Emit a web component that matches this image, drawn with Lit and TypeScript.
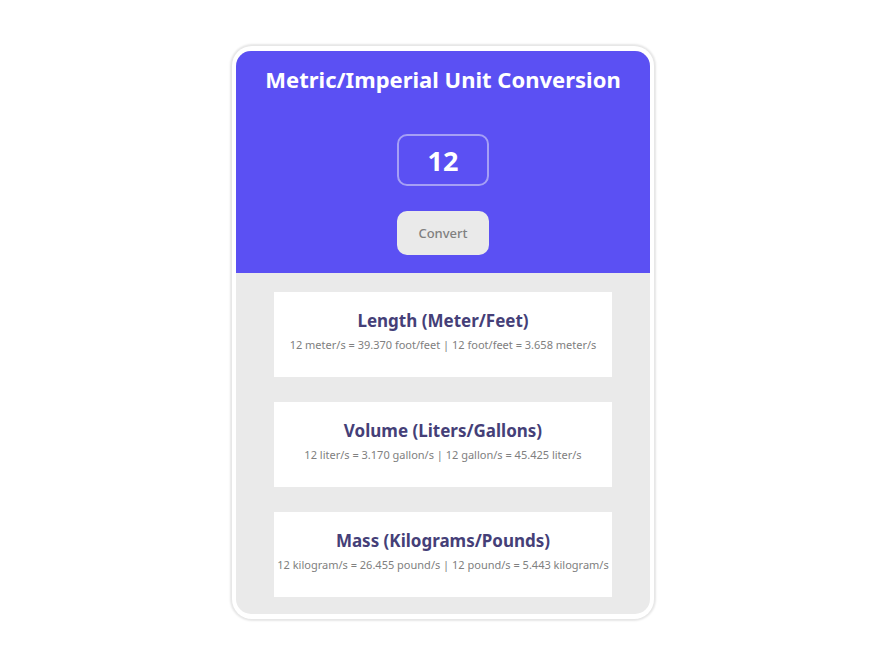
import { LitElement, html, css } from "lit";
import { customElement, state } from "lit/decorators.js";

interface Result {
  name: string;
  values: string;
}

@customElement("app-root")
export class AppRoot extends LitElement {
  static styles = css`
    :host {
      display: flex;
      justify-content: center;
      align-items: center;
      box-sizing: border-box;
      min-height: 100vh;
      padding: 1px 6px 0 0;
      background: #fff;
      font-family: "Noto Sans", "Open Sans", sans-serif;
    }
    * {
      box-sizing: border-box;
    }
    .card {
      width: 100%;
      max-width: 422px;
      padding: 5px 4px;
      border-radius: 20px;
      background: #fff;
      box-shadow: 0 0 2px 2px #e6e6e6;
    }
    .panel {
      border-radius: 15px;
      overflow: hidden;
      background: #eaeaea;
    }
    .top {
      display: flex;
      flex-direction: column;
      align-items: center;
      padding: 12px 0 18px;
      background: #5b50f3;
    }
    .title {
      margin: 0 0 39px;
      font-size: 22px;
      line-height: 32px;
      font-weight: 700;
      color: #fff;
      white-space: nowrap;
    }
    .amount {
      width: 92px;
      height: 52px;
      margin: 0 0 25px;
      padding: 0;
      border: 2px solid #a59ff5;
      border-radius: 10px;
      background: transparent;
      color: #fff;
      font-family: inherit;
      font-size: 27px;
      font-weight: 700;
      text-align: center;
      outline: none;
    }
    .convert {
      width: 92px;
      height: 44px;
      padding: 0;
      border: 0;
      border-radius: 10px;
      background: #eaeaea;
      color: #808080;
      font-family: inherit;
      font-size: 13px;
      font-weight: 500;
    }
    .results {
      display: flex;
      flex-direction: column;
      gap: 25px;
      padding: 19px 38px 17px;
    }
    .result {
      padding: 16px 0 21px;
      background: #fff;
      text-align: center;
      white-space: nowrap;
    }
    .name {
      margin: 0;
      font-size: 17px;
      line-height: 26px;
      font-weight: 700;
      color: #453f78;
    }
    .values {
      margin: 0;
      font-size: 11px;
      line-height: 22px;
      color: #808080;
    }
  `;

  @state() private amount = "12";

  @state() private results: Result[] = [
    {
      name: "Length (Meter/Feet)",
      values: "12 meter/s = 39.370 foot/feet | 12 foot/feet = 3.658 meter/s",
    },
    {
      name: "Volume (Liters/Gallons)",
      values: "12 liter/s = 3.170 gallon/s | 12 gallon/s = 45.425 liter/s",
    },
    {
      name: "Mass (Kilograms/Pounds)",
      values: "12 kilogram/s = 26.455 pound/s | 12 pound/s = 5.443 kilogram/s",
    },
  ];

  render() {
    return html`
      <main class="card">
        <div class="panel">
          <header class="top">
            <h1 class="title">Metric/Imperial Unit Conversion</h1>
            <input class="amount" type="text" inputmode="decimal" aria-label="Amount" .value=${this.amount} />
            <button class="convert" type="button">Convert</button>
          </header>
          <section class="results">
            ${this.results.map(
              (r) => html`
                <article class="result">
                  <h2 class="name">${r.name}</h2>
                  <p class="values">${r.values}</p>
                </article>
              `
            )}
          </section>
        </div>
      </main>
    `;
  }
}
